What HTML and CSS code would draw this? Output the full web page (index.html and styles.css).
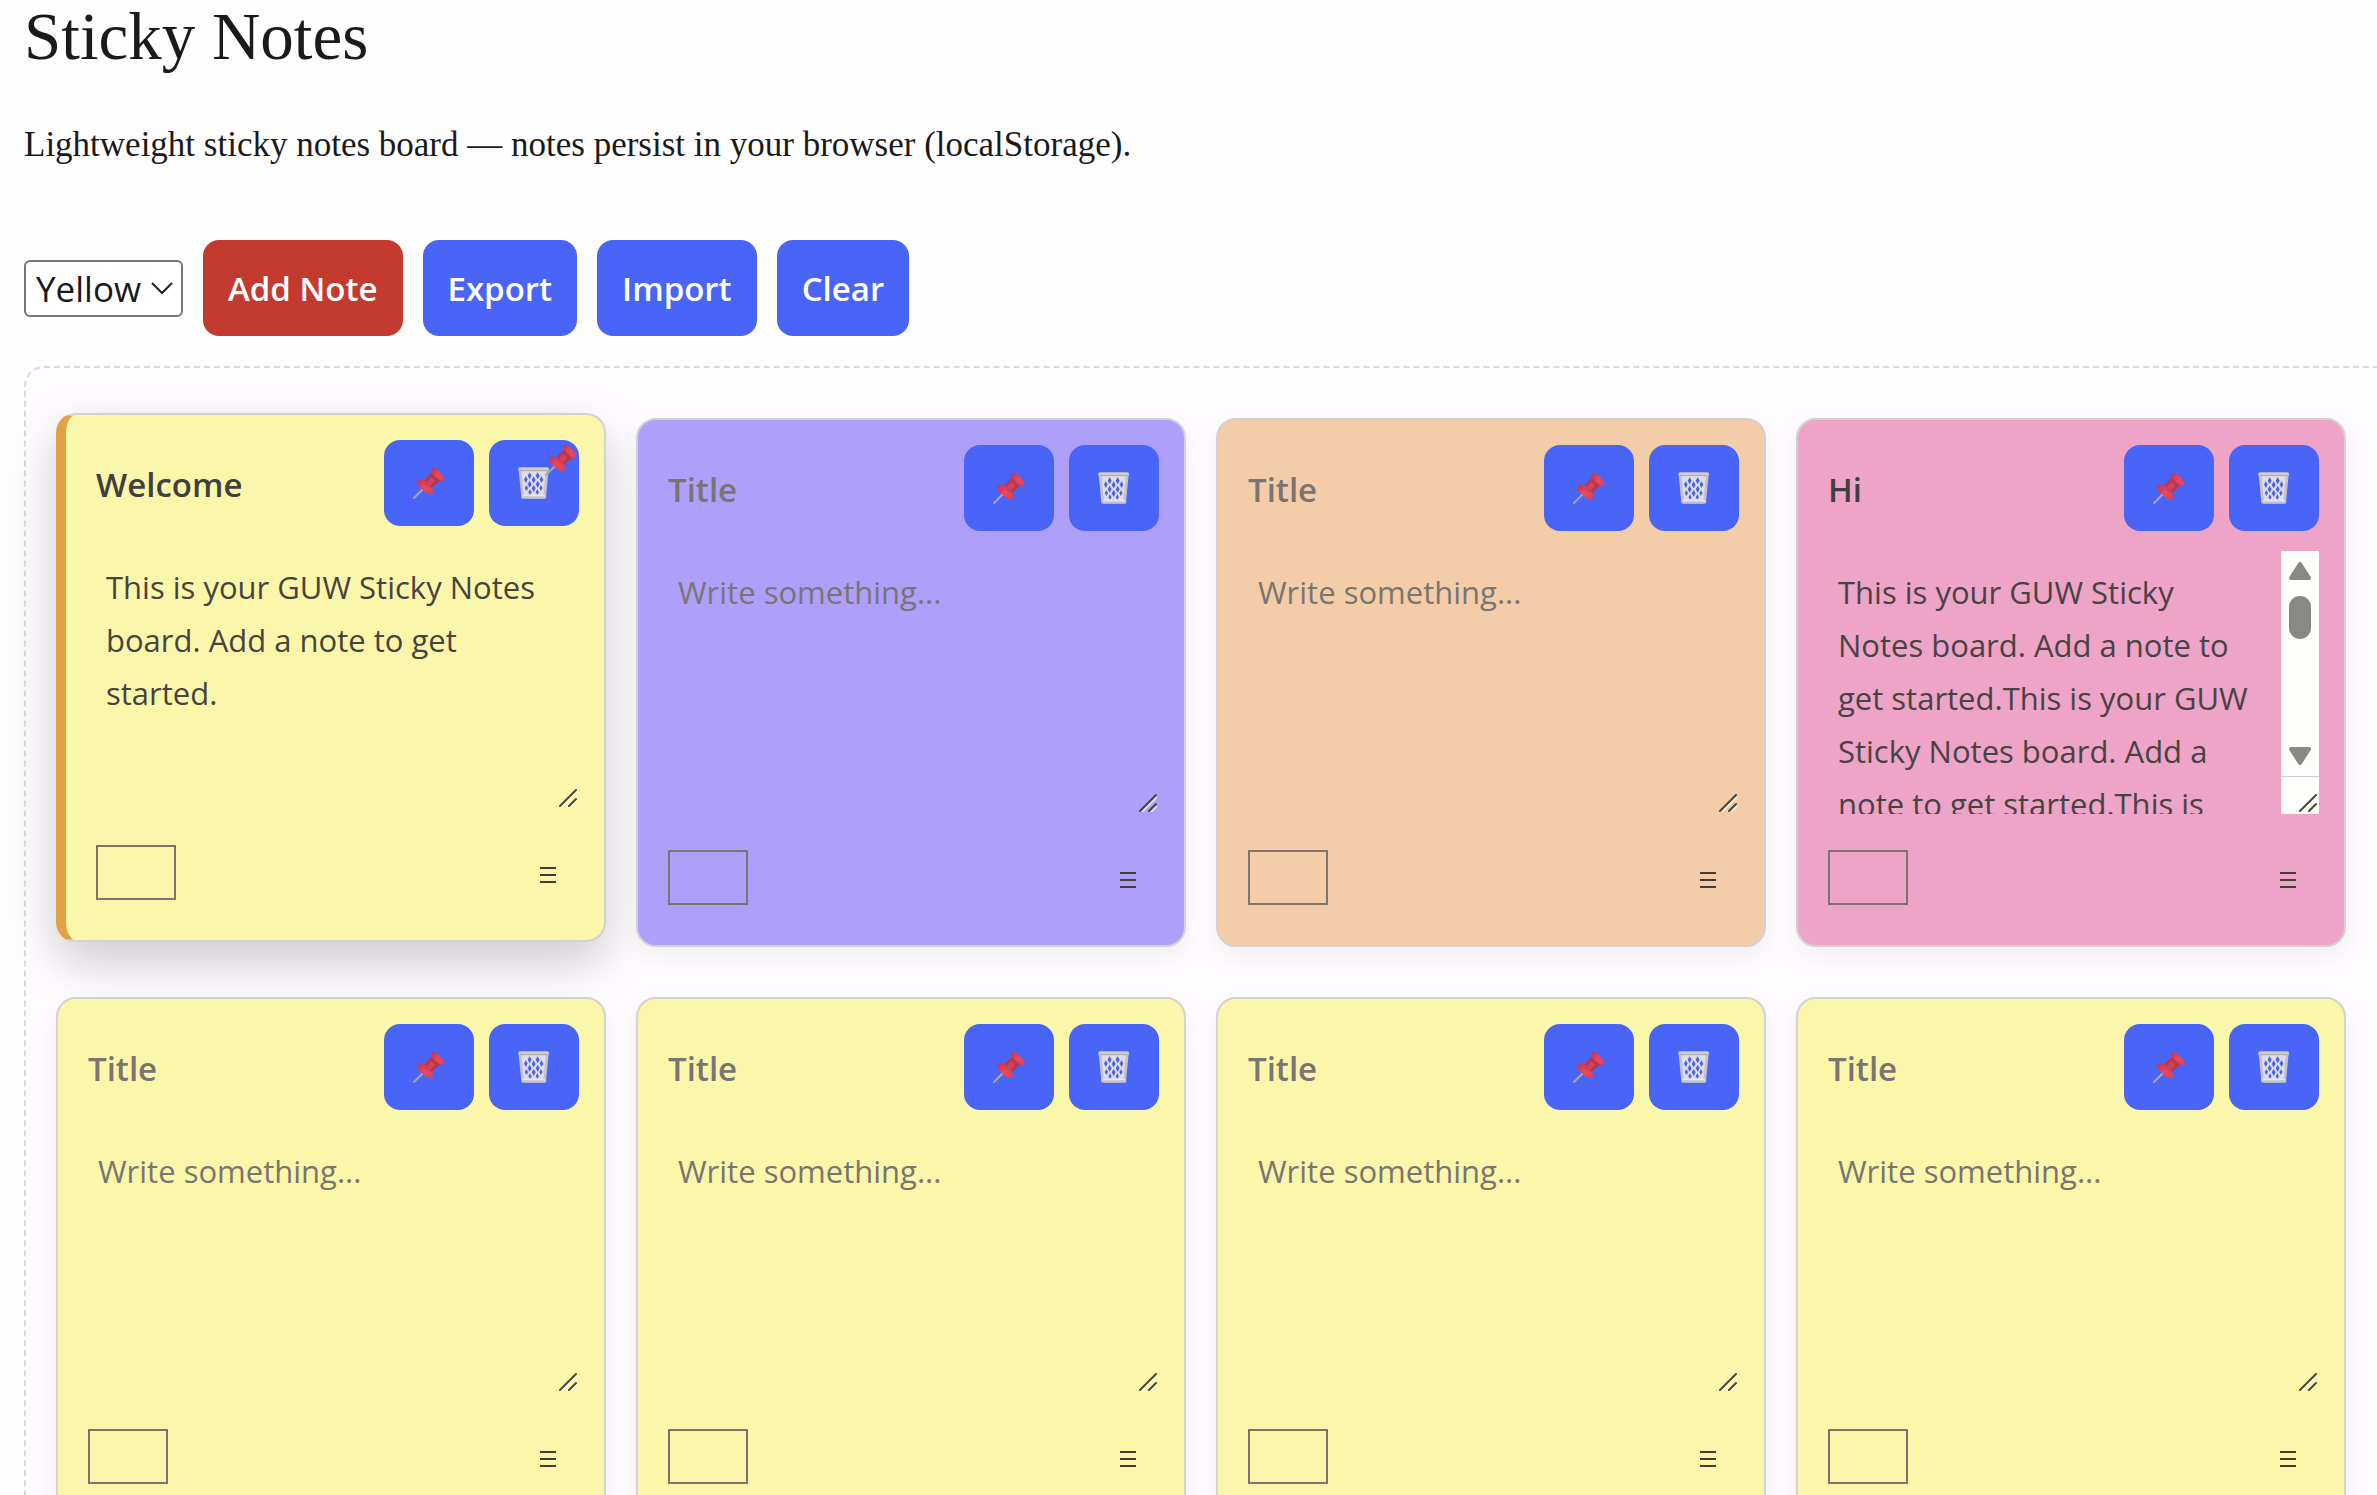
FILE: index.html
```html
<!DOCTYPE html>
<html lang="en">
<head>
<meta charset="utf-8">
<title>Sticky Notes</title>
<link rel="stylesheet" href="styles.css">
</head>
<body>
<svg class="symbols" aria-hidden="true">
  <defs>
    <linearGradient id="red" x1="0" y1="0" x2="1" y2="1"><stop offset="0" stop-color="#c9304a"/><stop offset="0.5" stop-color="#ea485e"/><stop offset="1" stop-color="#da4058"/></linearGradient>
    <symbol id="pin" viewBox="0 0 96 96">
      <path d="M36 60 3 93" stroke="#a9a3ae" stroke-width="6" stroke-linecap="round"/>
      <path d="M58 14 82 40 54 66 30 44Z" fill="#b93550"/>
      <path d="M15 41C22 34 34 39 46 51S66 74 59 80 38 78 26 66 9 47 15 41Z" fill="url(#red)"/>
      <path d="M56 5C62 0 72 7 82 17S98 35 93 41 76 38 67 28 50 11 56 5Z" fill="url(#red)"/>
      <path d="M34 50C40 45 50 36 55 29L66 41C61 47 55 54 49 62Z" fill="#cf4258"/>
    </symbol>
    <symbol id="bin" viewBox="0 0 96 96">
      <path d="M6 8H88L80 90H14Z" fill="#dddce8"/>
      <path d="M6 8 14 90M88 8 80 90" stroke="#c5c1c8" stroke-width="8" fill="none"/>
      <g fill="#4d63e0">
        <path d="M35 16 41 26 35 37 29 26ZM59 16 65 26 59 37 53 26ZM23 28 29 37 24 48 18 38ZM47 28 53 39 47 49 41 39ZM71 28 76 38 70 48 65 37ZM35 41 41 52 35 62 29 52ZM59 41 65 52 59 62 53 52ZM25 55 30 63 26 72 20 63ZM47 54 53 64 47 75 41 64ZM69 55 74 63 68 72 64 63ZM36 67 41 76 36 83 31 76ZM58 67 63 76 58 83 53 76Z"/>
      </g>
      <rect x="1" y="1" width="92" height="11" rx="5" fill="#d0ccd0"/>
      <path d="M5 11H89" stroke="#aaa6ad" stroke-width="3"/>
      <rect x="10" y="84" width="75" height="11" rx="5" fill="#cbc6c9"/>
      <path d="M14 86H81" stroke="#f0eff3" stroke-width="3"/>
    </symbol>
    <symbol id="grip" viewBox="0 0 18 18"><path d="M3 18 18 3M12 18 18 12" stroke="#fff" stroke-opacity=".6" stroke-width="2"/><path d="M1 17 17 1M10 17 17 10" stroke="#4c4638" stroke-width="2" stroke-linecap="round"/></symbol>
    <symbol id="bars" viewBox="0 0 16 16"><path d="M0 1H16M0 8H16M0 15H16" stroke="#423c35" stroke-width="2"/></symbol>
  </defs>
</svg>

<header class="intro">
  <h1>Sticky Notes</h1>
  <p>Lightweight sticky notes board — notes persist in your browser (localStorage).</p>
</header>

<div class="toolbar">
  <div class="picker">
    <select aria-label="Note color"><option>Yellow</option><option>Purple</option><option>Peach</option><option>Pink</option></select>
    <svg class="chevron" viewBox="0 0 22 13" aria-hidden="true"><path d="M1 1 11 11 21 1" fill="none" stroke="#222" stroke-width="2"/></svg>
  </div>
  <button class="btn btn-add" type="button">Add Note</button>
  <button class="btn" type="button">Export</button>
  <button class="btn" type="button">Import</button>
  <button class="btn" type="button">Clear</button>
</div>

<main class="board">
  <article class="note pinned">
    <svg class="badge" aria-hidden="true"><use href="#pin"/></svg>
    <div class="note-head"><input class="title" type="text" aria-label="Title" placeholder="Title" value="Welcome"><button class="icon-btn" type="button" aria-label="Pin"><svg><use href="#pin"/></svg></button><button class="icon-btn" type="button" aria-label="Delete"><svg><use href="#bin"/></svg></button></div>
    <div class="note-body"><textarea aria-label="Note text" placeholder="Write something...">This is your GUW Sticky Notes board. Add a note to get started.</textarea><svg class="grip" aria-hidden="true"><use href="#grip"/></svg></div>
    <div class="note-foot"><input class="swatch" type="color" aria-label="Color" value="#fbf7aa"><button class="handle" type="button" aria-label="Move"><svg><use href="#bars"/></svg></button></div>
  </article>
  <article class="note purple">
    <div class="note-head"><input class="title" type="text" aria-label="Title" placeholder="Title"><button class="icon-btn" type="button" aria-label="Pin"><svg><use href="#pin"/></svg></button><button class="icon-btn" type="button" aria-label="Delete"><svg><use href="#bin"/></svg></button></div>
    <div class="note-body"><textarea aria-label="Note text" placeholder="Write something..."></textarea><svg class="grip" aria-hidden="true"><use href="#grip"/></svg></div>
    <div class="note-foot"><input class="swatch" type="color" aria-label="Color" value="#ae9ffa"><button class="handle" type="button" aria-label="Move"><svg><use href="#bars"/></svg></button></div>
  </article>
  <article class="note peach">
    <div class="note-head"><input class="title" type="text" aria-label="Title" placeholder="Title"><button class="icon-btn" type="button" aria-label="Pin"><svg><use href="#pin"/></svg></button><button class="icon-btn" type="button" aria-label="Delete"><svg><use href="#bin"/></svg></button></div>
    <div class="note-body"><textarea aria-label="Note text" placeholder="Write something..."></textarea><svg class="grip" aria-hidden="true"><use href="#grip"/></svg></div>
    <div class="note-foot"><input class="swatch" type="color" aria-label="Color" value="#f3cda8"><button class="handle" type="button" aria-label="Move"><svg><use href="#bars"/></svg></button></div>
  </article>
  <article class="note pink">
    <div class="note-head"><input class="title" type="text" aria-label="Title" placeholder="Title" value="Hi"><button class="icon-btn" type="button" aria-label="Pin"><svg><use href="#pin"/></svg></button><button class="icon-btn" type="button" aria-label="Delete"><svg><use href="#bin"/></svg></button></div>
    <div class="note-body"><textarea class="scrolling" aria-label="Note text" placeholder="Write something...">This is your GUW Sticky Notes board. Add a note to get started.This is your GUW Sticky Notes board. Add a note to get started.This is your GUW Sticky Notes board.</textarea>
      <div class="scrollbar" aria-hidden="true">
        <svg class="arrow" viewBox="0 0 22 18"><path d="M11 2 20 16H2Z" fill="#888886" stroke="#888886" stroke-width="4" stroke-linejoin="round"/></svg>
        <span class="thumb"></span>
        <svg class="arrow arrow-down" viewBox="0 0 22 18"><path d="M11 16 20 2H2Z" fill="#888886" stroke="#888886" stroke-width="4" stroke-linejoin="round"/></svg>
        <span class="corner"></span>
      </div>
      <svg class="grip" aria-hidden="true"><use href="#grip"/></svg></div>
    <div class="note-foot"><input class="swatch" type="color" aria-label="Color" value="#eea4c7"><button class="handle" type="button" aria-label="Move"><svg><use href="#bars"/></svg></button></div>
  </article>
  <article class="note">
    <div class="note-head"><input class="title" type="text" aria-label="Title" placeholder="Title"><button class="icon-btn" type="button" aria-label="Pin"><svg><use href="#pin"/></svg></button><button class="icon-btn" type="button" aria-label="Delete"><svg><use href="#bin"/></svg></button></div>
    <div class="note-body"><textarea aria-label="Note text" placeholder="Write something..."></textarea><svg class="grip" aria-hidden="true"><use href="#grip"/></svg></div>
    <div class="note-foot"><input class="swatch" type="color" aria-label="Color" value="#fbf7aa"><button class="handle" type="button" aria-label="Move"><svg><use href="#bars"/></svg></button></div>
  </article>
  <article class="note">
    <div class="note-head"><input class="title" type="text" aria-label="Title" placeholder="Title"><button class="icon-btn" type="button" aria-label="Pin"><svg><use href="#pin"/></svg></button><button class="icon-btn" type="button" aria-label="Delete"><svg><use href="#bin"/></svg></button></div>
    <div class="note-body"><textarea aria-label="Note text" placeholder="Write something..."></textarea><svg class="grip" aria-hidden="true"><use href="#grip"/></svg></div>
    <div class="note-foot"><input class="swatch" type="color" aria-label="Color" value="#fbf7aa"><button class="handle" type="button" aria-label="Move"><svg><use href="#bars"/></svg></button></div>
  </article>
  <article class="note">
    <div class="note-head"><input class="title" type="text" aria-label="Title" placeholder="Title"><button class="icon-btn" type="button" aria-label="Pin"><svg><use href="#pin"/></svg></button><button class="icon-btn" type="button" aria-label="Delete"><svg><use href="#bin"/></svg></button></div>
    <div class="note-body"><textarea aria-label="Note text" placeholder="Write something..."></textarea><svg class="grip" aria-hidden="true"><use href="#grip"/></svg></div>
    <div class="note-foot"><input class="swatch" type="color" aria-label="Color" value="#fbf7aa"><button class="handle" type="button" aria-label="Move"><svg><use href="#bars"/></svg></button></div>
  </article>
  <article class="note">
    <div class="note-head"><input class="title" type="text" aria-label="Title" placeholder="Title"><button class="icon-btn" type="button" aria-label="Pin"><svg><use href="#pin"/></svg></button><button class="icon-btn" type="button" aria-label="Delete"><svg><use href="#bin"/></svg></button></div>
    <div class="note-body"><textarea aria-label="Note text" placeholder="Write something..."></textarea><svg class="grip" aria-hidden="true"><use href="#grip"/></svg></div>
    <div class="note-foot"><input class="swatch" type="color" aria-label="Color" value="#fbf7aa"><button class="handle" type="button" aria-label="Move"><svg><use href="#bars"/></svg></button></div>
  </article>
</main>
</body>
</html>
```
FILE: styles.css
```css
* {
  box-sizing: border-box;
}

body {
  margin: 0;
  padding-left: 24px;
  background: #fefefe;
  color: #1a1a1a;
  font-family: "Liberation Serif", "Times New Roman", serif;
}

button,
input,
select,
textarea {
  font-family: "Open Sans", "Noto Sans", sans-serif;
}

.symbols {
  position: absolute;
  width: 0;
  height: 0;
}

.intro h1 {
  margin: 0 0 53px;
  font-size: 67px;
  line-height: 72px;
  font-weight: 400;
}

.intro p {
  margin: 0 0 75px;
  font-size: 35px;
  line-height: 40px;
}

.toolbar {
  display: flex;
  align-items: center;
  gap: 20px;
  margin-bottom: 30px;
}

.picker {
  position: relative;
}

.picker select {
  display: block;
  width: 159px;
  height: 57px;
  padding: 0 10px;
  border: 2px solid #767676;
  border-radius: 6px;
  background: #fff;
  color: #1a1a1a;
  font-size: 35px;
  appearance: none;
}

.chevron {
  position: absolute;
  right: 10px;
  top: 22px;
  width: 22px;
  height: 13px;
  pointer-events: none;
}

.btn {
  height: 96px;
  padding: 0 25px;
  border: 0;
  border-radius: 16px;
  background: #4965f8;
  color: #fff;
  font-size: 33px;
  font-weight: 600;
}

.btn-add {
  background: #c33a2e;
}

.board {
  display: grid;
  grid-template-columns: repeat(4, 1fr);
  gap: 50px 30px;
  padding: 50px 31px 50px 30px;
  border: 2px dashed #dcdadc;
  border-right: 0;
  border-radius: 20px 0 0 20px;
  background: #fefcfe;
}

.note {
  position: relative;
  display: flex;
  flex-direction: column;
  gap: 20px;
  min-width: 0;
  padding: 25px;
  border: 2px solid #d3d1d3;
  border-radius: 20px;
  background: #fbf7aa;
  box-shadow: 0 10px 24px rgba(0, 0, 0, 0.06);
}

.purple {
  background: #ae9ffa;
}

.peach {
  background: #f3cda8;
}

.pink {
  background: #eea4c7;
}

.pinned {
  border-left: 10px solid #e0a243;
  box-shadow: 0 20px 50px rgba(0, 0, 0, 0.2);
  transform: translateY(-5px);
}

.badge {
  position: absolute;
  top: 29px;
  right: 27px;
  width: 32px;
  height: 32px;
}

.note-head {
  display: flex;
  align-items: center;
  gap: 15px;
}

.title {
  flex: 1;
  min-width: 0;
  padding: 8px 5px 5px;
  border: 0;
  background: none;
  color: #423f3f;
  font-size: 33px;
  font-weight: 600;
}

::placeholder {
  color: #7a7472;
  opacity: 1;
}

.icon-btn {
  display: flex;
  align-items: center;
  justify-content: center;
  width: 90px;
  height: 86px;
  padding: 0;
  border: 0;
  border-radius: 16px;
  background: #4965f8;
}

.icon-btn svg {
  width: 32px;
  height: 32px;
}

.note-body {
  position: relative;
  display: flex;
  height: 263px;
}

.note-body textarea {
  flex: 1;
  min-width: 0;
  padding: 15px;
  border: 0;
  background: none;
  color: #484341;
  font-size: 31px;
  line-height: 53px;
  resize: none;
  overflow: hidden;
}

/* keeps the text clear of the scrollbar */
.note-body .scrolling {
  padding-right: 25px;
}

.grip {
  position: absolute;
  right: 2px;
  bottom: 2px;
  width: 18px;
  height: 18px;
}

.scrollbar {
  display: flex;
  flex-direction: column;
  align-items: center;
  width: 38px;
  padding-top: 11px;
  background: #fdfdfc;
}

.arrow {
  width: 22px;
  height: 18px;
}

.thumb {
  width: 22px;
  height: 43px;
  margin-top: 16px;
  border-radius: 11px;
  background: #888886;
}

.arrow-down {
  margin-top: auto;
  margin-bottom: 11px;
}

.corner {
  align-self: stretch;
  height: 38px;
  border-top: 1px solid #d0d0d0;
}

.note-foot {
  display: flex;
  align-items: center;
  justify-content: space-between;
  height: 86px;
  padding-left: 5px;
}

.swatch {
  width: 80px;
  height: 55px;
  padding: 0;
  border: 2px solid #7c7470;
  background: none;
  appearance: none;
}

.swatch::-webkit-color-swatch-wrapper {
  padding: 0;
}

.swatch::-webkit-color-swatch {
  border: 0;
}

.handle {
  padding: 30px 23px 25px;
  border: 0;
  background: none;
}

.handle svg {
  display: block;
  width: 16px;
  height: 16px;
}
```
